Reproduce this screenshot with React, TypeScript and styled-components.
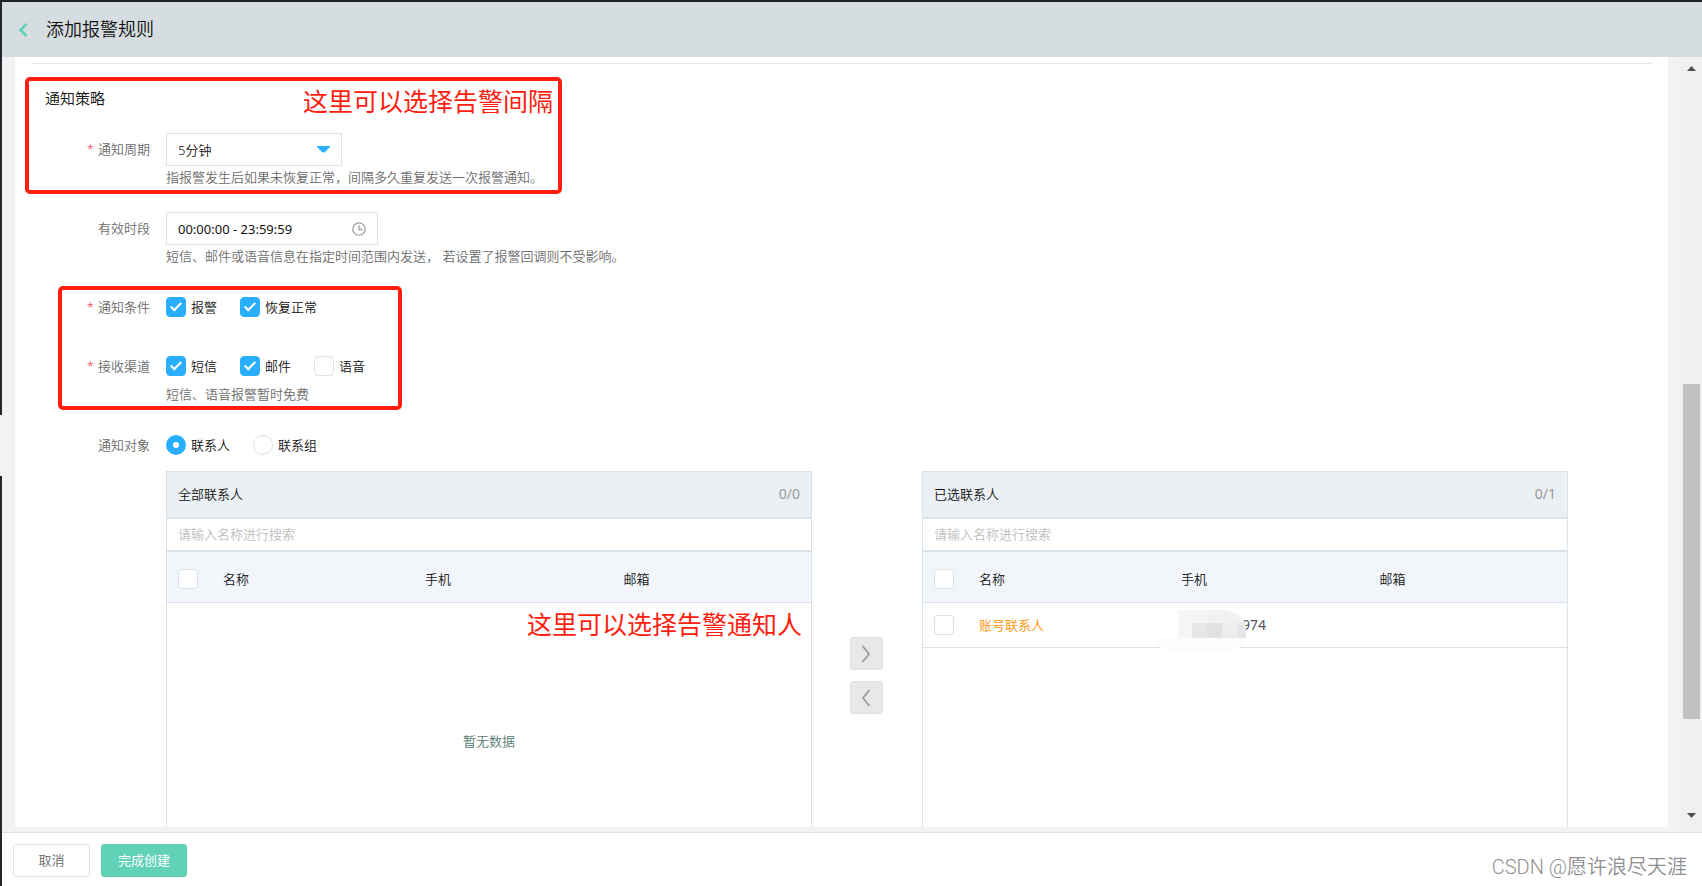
import React, { useState } from 'react';
import styled, { createGlobalStyle } from 'styled-components';

const color = {
  line: '#d9e2e9',
  text: '#111111',
  label: '#6c6c6c',
  blue: '#2aafff',
  mint: '#61d2b8',
  canvas: '#f2f2f5',
  mark: '#ff1d10',
};

const GlobalStyle = createGlobalStyle`
  *, *::before, *::after { box-sizing: border-box; }
  html, body, #root { height: 100%; }
  body {
    margin: 0;
    color: ${color.text};
    font: 350 13px/20px "Noto Sans", "Noto Sans CJK SC", sans-serif;
  }
  button, input, select { font: inherit; color: inherit; margin: 0; }
`;

const Frame = styled.div`
  display: flex;
  height: 100vh;
  border-top: 2px solid #222222;
  overflow: hidden;
`;

const Rail = styled.div`
  display: flex;
  flex-direction: column;
  flex: none;
  width: 2px;
  background: ${color.canvas};
  gap: 61px;
`;

const RailPart = styled.div<{ $grow: number }>`
  flex: ${(p) => p.$grow};
  background: #26262a;
`;

const Page = styled.div`
  display: flex;
  flex-direction: column;
  flex: 1;
  min-width: 0;
  background: ${color.canvas};
`;

const Header = styled.header`
  display: flex;
  align-items: center;
  flex: none;
  gap: 17px;
  height: 55px;
  padding: 0 15px 1px;
  background: #d5dde0;
`;

const BackButton = styled.button`
  display: flex;
  padding: 2px 0 0;
  border: 0;
  background: none;
`;

const Title = styled.h1`
  margin: 0;
  font-size: 18px;
  line-height: 24px;
  font-weight: inherit;
`;

const Viewport = styled.div`
  display: flex;
  flex: 1;
  min-height: 0;
  margin-bottom: 5px;
  overflow: hidden;
`;

const Panel = styled.main`
  position: relative;
  flex: 1;
  min-width: 0;
  margin: 0 13px;
  padding: 6px 17px 0;
  background: #ffffff;
`;

const Divider = styled.hr`
  margin: 0 0 24px;
  border: 0;
  border-top: 1px dotted #c9cfd3;
`;

const SectionTitle = styled.h2`
  margin: 0 0 25px 13px;
  font-size: 15px;
  line-height: 20px;
  font-weight: inherit;
`;

const Form = styled.form`
  display: flex;
  flex-direction: column;
  gap: 24px;
  padding-right: 83px;
`;

const Row = styled.div`
  display: grid;
  grid-template-columns: 118px minmax(0, 1fr);
  column-gap: 16px;
  min-height: 35px;
`;

const RowLabel = styled.label`
  line-height: 33px;
  text-align: right;
  color: ${color.label};
`;

const Star = styled.span`
  margin-right: 4px;
  color: #f0404a;
`;

const Help = styled.p`
  margin: 0;
  line-height: 22px;
  color: ${color.label};
`;

const Field = styled.div<{ $width: number }>`
  display: grid;
  align-items: center;
  width: ${(p) => p.$width}px;
  height: 33px;

  > * { grid-area: 1 / 1; }
  > svg { justify-self: end; margin-right: 12px; pointer-events: none; }
`;

const Select = styled.select`
  width: 100%;
  height: 33px;
  padding: 0 11px;
  border: 1px solid ${color.line};
  border-radius: 0;
  background: #ffffff;
  appearance: none;
`;

const TimeInput = styled.input`
  width: 100%;
  height: 33px;
  padding: 0 11px;
  border: 1px solid ${color.line};
  font-size: 13px;
  font-weight: 400;
`;

const Options = styled.div`
  display: flex;
  align-items: center;
  gap: 23px;
  height: 33px;
  padding-bottom: 1px;
`;

const OptionLabel = styled.label`
  display: flex;
  align-items: center;
  gap: 5px;
`;

const Checkbox = styled.input.attrs({ type: 'checkbox' })`
  display: grid;
  place-items: center;
  flex: none;
  width: 20px;
  height: 20px;
  border: 1px solid ${color.line};
  border-radius: 4px;
  background: #ffffff;
  appearance: none;

  &:checked {
    border-color: ${color.blue};
    background: ${color.blue};
  }
  &:checked::after {
    content: '';
    width: 6px;
    height: 11px;
    margin-bottom: 3px;
    border: solid #ffffff;
    border-width: 0 2px 2px 0;
    transform: rotate(45deg);
  }
`;

const Radio = styled.input.attrs({ type: 'radio' })`
  flex: none;
  width: 20px;
  height: 20px;
  border: 1px solid ${color.line};
  border-radius: 50%;
  background: #ffffff;
  appearance: none;

  &:checked { border: 7px solid ${color.blue}; }
`;

const Transfer = styled.div`
  display: flex;
  align-items: center;
  margin-top: 9px;
`;

const List = styled.section`
  flex: 1;
  min-width: 0;
  border: 1px solid ${color.line};
`;

const ListHead = styled.div`
  display: flex;
  align-items: center;
  justify-content: space-between;
  height: 47px;
  padding: 0 11px 2px;
  border-bottom: 2px solid ${color.line};
  background: #ebf0f4;
`;

const Count = styled.span`
  font-size: 14px;
  font-weight: 400;
  color: #999999;
`;

const Search = styled.input`
  display: block;
  width: 100%;
  height: 33px;
  padding: 0 11px 1px;
  border: 0;
  border-bottom: 2px solid ${color.line};
  background: #ffffff;

  &::placeholder { color: #bebebe; opacity: 1; }
`;

const ListBody = styled.div`
  display: flex;
  flex-direction: column;
  height: 327px;
`;

const Table = styled.table`
  width: 100%;
  table-layout: fixed;
  border-collapse: separate;
  border-spacing: 0;
`;

const HeadCell = styled.th<{ $width?: number }>`
  width: ${(p) => (p.$width ? `${p.$width}px` : 'auto')};
  height: 51px;
  padding: 3px 0 0 11px;
  border-bottom: 1px solid ${color.line};
  background: #f2f6fb;
  font-weight: inherit;
  text-align: left;
`;

const Cell = styled.td`
  position: relative;
  height: 45px;
  padding: 0 0 0 11px;
  border-bottom: 1px solid ${color.line};
`;

const ContactName = styled.span`
  color: #ff9200;
`;

const PhoneTail = styled.span`
  margin-left: 61px;
  font-size: 14px;
  font-weight: 400;
  color: #555555;
`;

const Mosaic = styled.svg`
  position: absolute;
  left: -17px;
  top: 7px;
`;

const Empty = styled.div`
  display: flex;
  align-items: center;
  justify-content: center;
  flex: 1;
  color: #557a72;
`;

const Moves = styled.div`
  display: flex;
  flex-direction: column;
  align-items: center;
  flex: none;
  gap: 11px;
  width: 110px;
  padding-right: 2px;
`;

const MoveButton = styled.button`
  display: grid;
  place-items: center;
  width: 33px;
  height: 33px;
  padding: 0;
  border: 1px solid ${color.line};
  border-radius: 3px;
  background: #e8e8e8;
`;

const Outline = styled.div<{ $x: number; $y: number; $w: number; $h: number }>`
  position: absolute;
  left: ${(p) => p.$x}px;
  top: ${(p) => p.$y}px;
  width: ${(p) => p.$w}px;
  height: ${(p) => p.$h}px;
  border: 4px solid ${color.mark};
  border-radius: 5px;
  pointer-events: none;
`;

const Remark = styled.div<{ $x: number; $y: number }>`
  position: absolute;
  left: ${(p) => p.$x}px;
  top: ${(p) => p.$y}px;
  font-size: 25px;
  line-height: 32px;
  font-weight: 400;
  white-space: nowrap;
  color: ${color.mark};
  pointer-events: none;
`;

const ScrollBar = styled.div`
  display: flex;
  flex-direction: column;
  align-items: center;
  flex: none;
  width: 21px;
  padding: 9px 0;
  background: #f0f0f0;
`;

const Track = styled.div`
  display: flex;
  flex-direction: column;
  flex: 1;
  width: 17px;
  margin: 4px 0;
`;

const TrackPart = styled.div<{ $grow: number; $thumb?: boolean }>`
  flex: ${(p) => p.$grow};
  background: ${(p) => (p.$thumb ? '#c1c1c1' : 'transparent')};
`;

const Footer = styled.footer`
  display: flex;
  align-items: flex-start;
  flex: none;
  gap: 11px;
  height: 54px;
  padding: 11px 15px 0 11px;
  border-top: 1px solid ${color.line};
  background: #ffffff;
`;

const Button = styled.button<{ $primary?: boolean }>`
  min-width: ${(p) => (p.$primary ? 86 : 77)}px;
  height: 33px;
  padding: 0 16px 1px;
  border: 1px solid ${(p) => (p.$primary ? color.mint : color.line)};
  border-radius: 3px;
  background: ${(p) => (p.$primary ? color.mint : '#ffffff')};
  color: ${(p) => (p.$primary ? '#ffffff' : '#666666')};
  font-weight: ${(p) => (p.$primary ? 400 : 'inherit')};
`;

const Credit = styled.span`
  margin-left: auto;
  padding-top: 11px;
  font-family: Roboto, "Noto Sans CJK SC", sans-serif;
  font-size: 20px;
  line-height: 24px;
  color: #909090;
`;

type OptionProps = { text: string; checked?: boolean };

function CheckOption({ text, checked }: OptionProps) {
  return (
    <OptionLabel>
      <Checkbox defaultChecked={checked} />
      {text}
    </OptionLabel>
  );
}

type ContactListProps = {
  title: string;
  count: string;
  children?: React.ReactNode;
  empty?: boolean;
};

function ContactList({ title, count, children, empty }: ContactListProps) {
  return (
    <List>
      <ListHead>
        <span>{title}</span>
        <Count>{count}</Count>
      </ListHead>
      <Search placeholder="请输入名称进行搜索" aria-label={title} />
      <ListBody>
        <Table>
          <thead>
            <tr>
              <HeadCell $width={45}>
                <Checkbox aria-label="全选" />
              </HeadCell>
              <HeadCell $width={202}>名称</HeadCell>
              <HeadCell>手机</HeadCell>
              <HeadCell>邮箱</HeadCell>
            </tr>
          </thead>
          <tbody>{children}</tbody>
        </Table>
        {empty && <Empty>暂无数据</Empty>}
      </ListBody>
    </List>
  );
}

function HiddenDigits() {
  return (
    <Mosaic width="94" height="42" viewBox="0 0 94 42" aria-hidden="true">
      <path d="M1 28h91q-2 9-10 12q-20 2-70 1Q5 38 1 28z" fill="#fbfdfd" />
      <path d="M25 0h45q22 2 23 20v8H25z" fill="#f5f5f6" />
      <path d="M54 0h16q12 1 17 8v5H54z" fill="#f1f1f2" />
      <path d="M39 13h15v15H39z" fill="#e6e6e6" />
      <path d="M54 13h15v15H54z" fill="#e1e1e1" />
      <path d="M69 13h15v15H69z" fill="#ededed" />
      <path d="M84 13h7q2 6 2 15h-9z" fill="#e6e6e6" />
    </Mosaic>
  );
}

export default function App() {
  const [target, setTarget] = useState('person');

  return (
    <>
      <GlobalStyle />
      <Frame>
        <Rail>
          <RailPart $grow={413} />
          <RailPart $grow={410} />
        </Rail>
        <Page>
          <Header>
            <BackButton type="button" aria-label="返回">
              <svg width="12" height="14" viewBox="0 0 12 14" fill="none" stroke={color.mint} strokeWidth="2.600">
                <path d="M9.500 1L3.500 7L9.500 13" />
              </svg>
            </BackButton>
            <Title>添加报警规则</Title>
          </Header>

          <Viewport>
            <Panel>
              <Divider />
              <SectionTitle>通知策略</SectionTitle>
              <Form onSubmit={(e) => e.preventDefault()}>
                <Row>
                  <RowLabel htmlFor="period"><Star>*</Star>通知周期</RowLabel>
                  <div>
                    <Field $width={176}>
                      <Select id="period" defaultValue="5">
                        <option value="5">5分钟</option>
                      </Select>
                      <svg width="13" height="7" viewBox="0 0 13 7" fill={color.blue}>
                        <path d="M0 0h13v1L7.500 6.500h-2L0 1z" />
                      </svg>
                    </Field>
                    <Help>指报警发生后如果未恢复正常，间隔多久重复发送一次报警通知。</Help>
                  </div>
                </Row>
                <Row>
                  <RowLabel htmlFor="span">有效时段</RowLabel>
                  <div>
                    <Field $width={212}>
                      <TimeInput id="span" defaultValue="00:00:00 - 23:59:59" />
                      <svg width="14" height="14" viewBox="0 0 14 14" fill="none" stroke="#a0a0a0" strokeWidth="1.3">
                        <circle cx="7" cy="7" r="6.200" />
                        <path d="M7 3.200V7.500h3.500" />
                      </svg>
                    </Field>
                    <Help>短信、邮件或语音信息在指定时间范围内发送， 若设置了报警回调则不受影响。</Help>
                  </div>
                </Row>
                <Row>
                  <RowLabel as="div"><Star>*</Star>通知条件</RowLabel>
                  <Options>
                    <CheckOption text="报警" checked />
                    <CheckOption text="恢复正常" checked />
                  </Options>
                </Row>
                <Row>
                  <RowLabel as="div"><Star>*</Star>接收渠道</RowLabel>
                  <div>
                    <Options>
                      <CheckOption text="短信" checked />
                      <CheckOption text="邮件" checked />
                      <CheckOption text="语音" />
                    </Options>
                    <Help>短信、语音报警暂时免费</Help>
                  </div>
                </Row>
                <Row>
                  <RowLabel as="div">通知对象</RowLabel>
                  <div>
                    <Options>
                      <OptionLabel>
                        <Radio name="target" checked={target === 'person'} onChange={() => setTarget('person')} />
                        联系人
                      </OptionLabel>
                      <OptionLabel>
                        <Radio name="target" checked={target === 'group'} onChange={() => setTarget('group')} />
                        联系组
                      </OptionLabel>
                    </Options>
                    <Transfer>
                      <ContactList title="全部联系人" count="0/0" empty />
                      <Moves>
                        <MoveButton type="button" aria-label="添加">
                          <svg width="10" height="18" viewBox="0 0 10 18" fill="none" stroke="#9b9b9b" strokeWidth="1.800">
                            <path d="M1.500 1L8 9L1.500 17" />
                          </svg>
                        </MoveButton>
                        <MoveButton type="button" aria-label="移除">
                          <svg width="10" height="18" viewBox="0 0 10 18" fill="none" stroke="#9b9b9b" strokeWidth="1.800">
                            <path d="M8.500 1L2 9L8.500 17" />
                          </svg>
                        </MoveButton>
                      </Moves>
                      <ContactList title="已选联系人" count="0/1">
                        <tr>
                          <Cell><Checkbox aria-label="账号联系人" /></Cell>
                          <Cell><ContactName>账号联系人</ContactName></Cell>
                          <Cell>
                            <PhoneTail>974</PhoneTail>
                            <HiddenDigits />
                          </Cell>
                          <Cell />
                        </tr>
                      </ContactList>
                    </Transfer>
                  </div>
                </Row>
              </Form>

              <Outline $x={10} $y={20} $w={537} $h={117} />
              <Outline $x={43} $y={229} $w={344} $h={124} />
              <Remark $x={288} $y={28}>这里可以选择告警间隔</Remark>
              <Remark $x={512} $y={551}>这里可以选择告警通知人</Remark>
            </Panel>
            <ScrollBar>
              <svg width="9" height="5" viewBox="0 0 9 5" fill="#505050"><path d="M4.500 0L9 5H0z" /></svg>
              <Track>
                <TrackPart $grow={313} />
                <TrackPart $grow={339} $thumb />
                <TrackPart $grow={91} />
              </Track>
              <svg width="9" height="5" viewBox="0 0 9 5" fill="#505050"><path d="M0 0h9L4.500 5z" /></svg>
            </ScrollBar>
          </Viewport>

          <Footer>
            <Button type="button">取消</Button>
            <Button type="button" $primary>完成创建</Button>
            <Credit>CSDN @愿许浪尽天涯</Credit>
          </Footer>
        </Page>
      </Frame>
    </>
  );
}
